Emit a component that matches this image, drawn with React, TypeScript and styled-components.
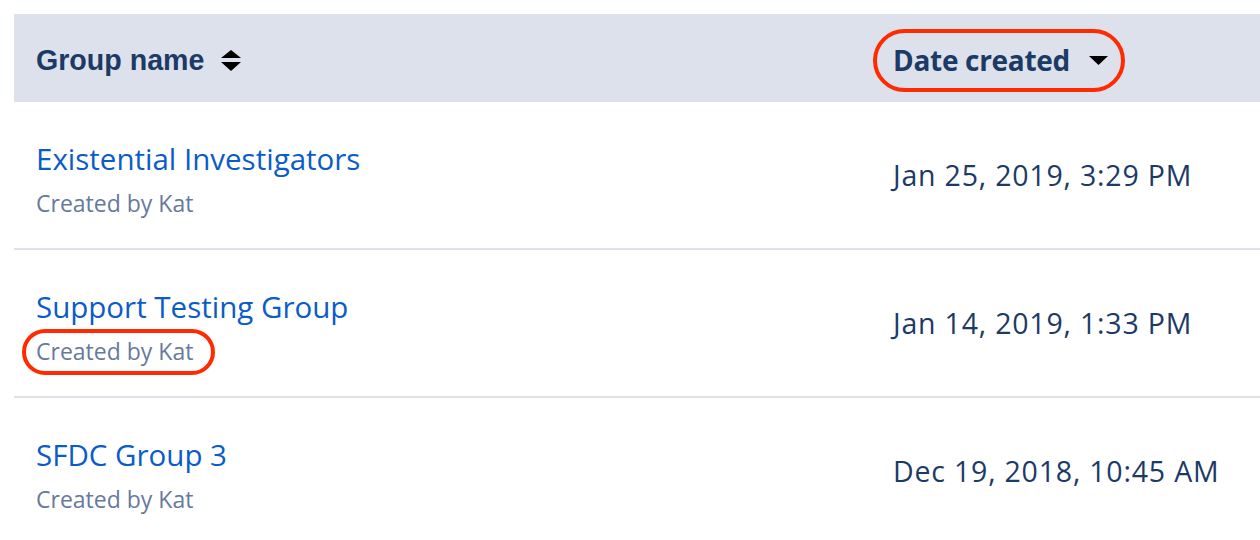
import React from "react";
import styled, { createGlobalStyle } from "styled-components";

const Global = createGlobalStyle`
  html, body { margin: 0; padding: 0; background: #ffffff; }
  body { font-family: "Open Sans", "Liberation Sans", sans-serif; }
`;

const Page = styled.div`
  padding: 14px 0 0 14px;
  overflow: hidden;
`;

const Table = styled.div`
  display: flex;
  flex-direction: column;
`;

const Row = styled.div<{ $header?: boolean }>`
  display: grid;
  grid-template-columns: 857px 1fr;
  align-items: center;
  padding-left: 22px;
  padding-top: ${(p) => (p.$header ? "4px" : "0")};
  box-sizing: border-box;
  height: ${(p) => (p.$header ? "88px" : "148px")};
  background: ${(p) => (p.$header ? "#dde1eb" : "#ffffff")};
  border-bottom: ${(p) => (p.$header ? "none" : "2px solid #dde1eb")};
`;

const HeadCell = styled.div`
  display: flex;
  align-items: center;
  gap: 17px;
`;

const HeadLabel = styled.span<{ $alt?: boolean }>`
  font-family: ${(p) =>
    p.$alt ? '"Open Sans", sans-serif' : '"Liberation Sans", Arial, sans-serif'};
  font-weight: 700;
  font-size: ${(p) => (p.$alt ? "28px" : "28.6px")};
  color: #1b3a66;
  letter-spacing: ${(p) => (p.$alt ? "-0.3px" : "0")};
`;

const Highlight = styled.span<{ $pad: string }>`
  position: relative;
  display: inline-flex;
  align-items: center;
  align-self: flex-start;
  gap: 19px;
  &::after {
    content: "";
    position: absolute;
    inset: ${(p) => p.$pad};
    border: 4px solid #ff2a00;
    border-radius: 999px;
    pointer-events: none;
  }
`;

const NameCell = styled.div`
  display: flex;
  flex-direction: column;
  gap: 10px;
  padding-top: 8px;
`;

const GroupLink = styled.a`
  font-size: 29.5px;
  line-height: 38px;
  color: #0b5cc7;
  text-decoration: none;
`;

const Creator = styled.span`
  font-size: 23px;
  line-height: 30px;
  color: #67799c;
  align-self: flex-start;
`;

const DateText = styled.span`
  font-size: 28.5px;
  letter-spacing: 0.8px;
  color: #1d3a66;
`;

const SortBoth = () => (
  <svg width="20" height="21" viewBox="0 0 20 21" aria-hidden>
    <polygon points="0,8 10,0 20,8" fill="#000" />
    <polygon points="0,12 20,12 10,21" fill="#000" />
  </svg>
);

const SortDown = () => (
  <svg width="19" height="9" viewBox="0 0 19 9" aria-hidden>
    <polygon points="0,0 19,0 9.5,9" fill="#000" />
  </svg>
);

const rows = [
  { name: "Existential Investigators", by: "Kat", date: "Jan 25, 2019, 3:29 PM", mark: false },
  { name: "Support Testing Group", by: "Kat", date: "Jan 14, 2019, 1:33 PM", mark: true },
  { name: "SFDC Group 3", by: "Kat", date: "Dec 19, 2018, 10:45 AM", mark: false },
];

export default function App() {
  return (
    <Page>
      <Global />
      <Table>
        <Row $header>
          <HeadCell>
            <HeadLabel>Group name</HeadLabel>
            <SortBoth />
          </HeadCell>
          <HeadCell>
            <Highlight $pad="-12px -17px -13px -20px">
              <HeadLabel $alt>Date created</HeadLabel>
              <SortDown />
            </Highlight>
          </HeadCell>
        </Row>
        {rows.map((r) => (
          <Row key={r.name}>
            <NameCell>
              <GroupLink href="#">{r.name}</GroupLink>
              {r.mark ? (
                <Highlight $pad="-7px -22px -9px -14px">
                  <Creator>Created by {r.by}</Creator>
                </Highlight>
              ) : (
                <Creator>Created by {r.by}</Creator>
              )}
            </NameCell>
            <DateText>{r.date}</DateText>
          </Row>
        ))}
      </Table>
    </Page>
  );
}
